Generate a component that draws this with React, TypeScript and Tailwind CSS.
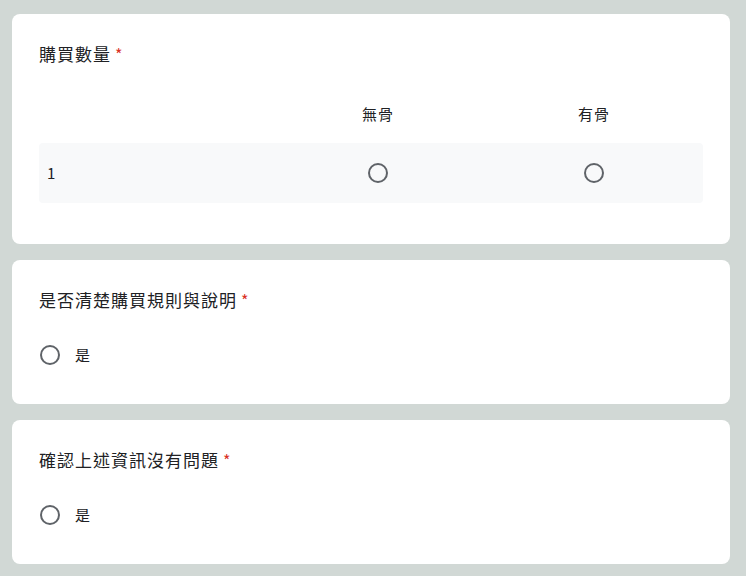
import React from 'react'

const font = { fontFamily: '"Noto Sans CJK TC", "Noto Sans", sans-serif' }

function Radio() {
  return <span className="block h-5 w-5 shrink-0 rounded-full border-2 border-[#5f6368] bg-transparent" />
}

function Title({ text }: { text: string }) {
  return (
    <div className="flex h-6 items-center leading-6 text-[#202124]">
      <span className="text-[17px] tracking-[1px]">{text}</span>
      <span className="ml-[4px] text-[16px] text-[#d93025]">*</span>
    </div>
  )
}

function YesCard({ title }: { title: string }) {
  return (
    <div className="h-[144px] rounded-lg bg-white px-[27px] pt-[28px]">
      <Title text={title} />
      <div className="mt-[31px] flex h-6 items-center pl-[1px]">
        <Radio />
        <span className="ml-[15px] text-[15px] leading-6 text-[#202124]">是</span>
      </div>
    </div>
  )
}

export default function App() {
  return (
    <div className="min-h-[576px] bg-[#d1d8d5] pl-[12px] pr-[16px] pt-[14px]" style={font}>
      <div className="flex w-[718px] flex-col gap-4">
        <div className="h-[230px] rounded-lg bg-white px-[27px] pt-[28px]">
          <Title text="購買數量" />
          <div className="mt-[36px] grid h-6 grid-cols-[231px_216px_216px] items-center text-[15px] text-[#202124]">
            <span />
            <span className="text-center tracking-[1px]">無骨</span>
            <span className="text-center tracking-[1px]">有骨</span>
          </div>
          <div className="mt-[17px] grid h-[60px] grid-cols-[231px_216px_216px] items-center rounded bg-[#f8f9fa] text-[15px] text-[#202124]">
            <span className="pl-2">1</span>
            <span className="flex justify-center">
              <Radio />
            </span>
            <span className="flex justify-center">
              <Radio />
            </span>
          </div>
        </div>
        <YesCard title="是否清楚購買規則與說明" />
        <YesCard title="確認上述資訊沒有問題" />
      </div>
    </div>
  )
}
